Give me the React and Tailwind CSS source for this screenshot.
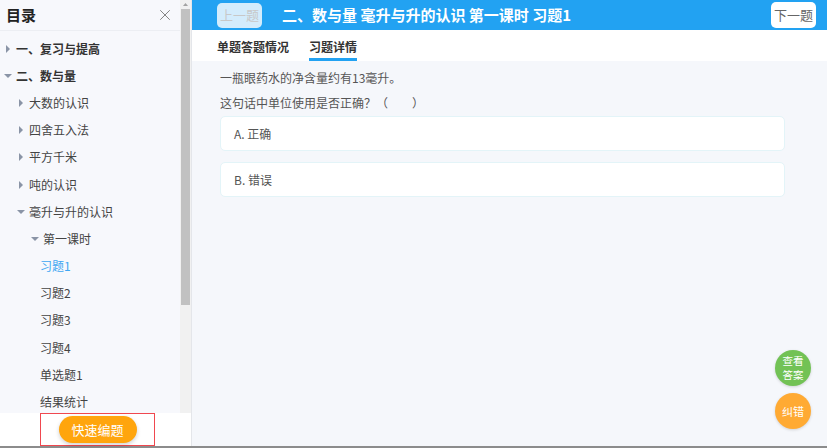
import { X } from "lucide-react";

const tree = [
  { label: "一、复习与提高", level: 0, arrow: "right" },
  { label: "二、数与量", level: 0, arrow: "down" },
  { label: "大数的认识", level: 1, arrow: "right" },
  { label: "四舍五入法", level: 1, arrow: "right" },
  { label: "平方千米", level: 1, arrow: "right" },
  { label: "吨的认识", level: 1, arrow: "right" },
  { label: "毫升与升的认识", level: 1, arrow: "down" },
  { label: "第一课时", level: 2, arrow: "down" },
  { label: "习题1", level: 3, active: true },
  { label: "习题2", level: 3 },
  { label: "习题3", level: 3 },
  { label: "习题4", level: 3 },
  { label: "单选题1", level: 3 },
  { label: "结果统计", level: 3 },
];

function Caret({ dir }) {
  return dir === "down" ? (
    <svg width="8" height="6" viewBox="0 0 8 6" className="shrink-0">
      <path d="M0 1h8L4 5z" fill="#8a94a6" />
    </svg>
  ) : (
    <svg width="6" height="8" viewBox="0 0 6 8" className="shrink-0">
      <path d="M1 0v8l4-4z" fill="#8a94a6" />
    </svg>
  );
}

function TreeRow({ item }) {
  const pad = ["pl-[4px]", "pl-[17px]", "pl-[31px]", "pl-[40px]"][item.level];
  const text = item.active
    ? "text-[#3ea6f2]"
    : item.level === 0
    ? "font-bold text-[#333]"
    : "text-[#444]";
  return (
    <div className={`flex h-[27.2px] shrink-0 items-center gap-[4px] ${pad}`}>
      {item.arrow && (
        <span className="flex w-[8px] justify-center">
          <Caret dir={item.arrow} />
        </span>
      )}
      <span className={`text-[12px] ${text}`}>{item.label}</span>
    </div>
  );
}

export default function App() {
  return (
    <div
      className="flex h-[448px] w-[827px] border-b-2 border-[#8c8c8c] bg-[#f5f7fb]"
      style={{ fontFamily: '"Noto Sans CJK SC", "Noto Sans", sans-serif' }}
    >
      {/* sidebar */}
      <div className="flex w-[192px] shrink-0 flex-col border-r border-[#e4e6ea]">
        <div className="flex h-[413px] shrink-0">
          <div className="flex flex-1 flex-col overflow-hidden bg-[#f7f8fc]">
            <div className="flex h-[31px] shrink-0 items-center justify-between border-b border-[#eceef3] pl-[6px] pr-[6px]">
              <span className="text-[15px] font-bold text-[#222]">目录</span>
              <X className="h-[18px] w-[18px] text-[#777]" strokeWidth={1.2} />
            </div>
            <div className="flex flex-col pt-[4px]">
              {tree.map((item) => (
                <TreeRow key={item.label} item={item} />
              ))}
            </div>
          </div>
          <div className="flex w-[11px] flex-col bg-[#f1f1f1]">
            <div className="flex h-[9px] items-center justify-center">
              <svg width="5" height="3" viewBox="0 0 5 3">
                <path d="M0 3h5L2.5 0z" fill="#a3a3a3" />
              </svg>
            </div>
            <div className="mx-[1px] h-[296px] bg-[#c1c1c1]" />
          </div>
        </div>
        <div className="flex flex-1 bg-white pl-[40px]">
          <div className="flex h-[33px] w-[115px] items-center justify-center border border-[#f0484f]">
            <button className="h-[27px] w-[78px] rounded-full bg-[#ffa50d] text-[13px] text-white shadow-[0_2px_4px_rgba(0,0,0,0.18)]">
              快速编题
            </button>
          </div>
        </div>
      </div>

      {/* main */}
      <div className="relative flex flex-1 flex-col">
        <div className="flex h-[30px] items-center bg-[#22a2f2] pl-[25px] pr-[11px]">
          <button className="h-[25px] w-[45px] rounded-[5px] bg-white/80 text-[13px] text-[#c8c8c8]">
            上一题
          </button>
          <span className="ml-[20px] flex-1 text-[15px] font-bold text-white">
            二、数与量 毫升与升的认识 第一课时 习题1
          </span>
          <button className="h-[26px] w-[45px] rounded-[5px] bg-white text-[13px] text-[#666]">
            下一题
          </button>
        </div>
        <div className="flex h-[31px] items-stretch gap-[20px] bg-white pl-[25px]">
          <span className="flex items-center pt-[2px] text-[12px] font-bold text-[#333]">单题答题情况</span>
          <span className="flex items-center border-b-[3px] border-[#22a2f2] pt-[5px] text-[12px] font-bold text-[#333]">
            习题详情
          </span>
        </div>
        <div className="pl-[28px] pr-[42px] pt-[7px] text-[12px] text-[#555]">
          <p className="h-[25px] leading-[20px]">一瓶眼药水的净含量约有13毫升。</p>
          <p className="h-[23px] leading-[20px]">这句话中单位使用是否正确？（　　）</p>
          <div className="flex flex-col gap-[11px]">
            <div className="flex h-[35px] items-center rounded-[5px] border border-[#e3f4f8] bg-white pl-[13px]">
              A. 正确
            </div>
            <div className="flex h-[35px] items-center rounded-[5px] border border-[#e3f4f8] bg-white pl-[13px]">
              B. 错误
            </div>
          </div>
        </div>
        <div className="absolute right-[16px] top-[350px] flex flex-col items-center gap-[7px]">
          <div className="flex h-[36px] w-[36px] flex-col items-center justify-center rounded-full bg-[#72c255] text-[10.5px] leading-[14px] text-white shadow-[0_1px_3px_rgba(0,0,0,0.15)]">
            <span>查看</span>
            <span>答案</span>
          </div>
          <div className="flex h-[36px] w-[36px] items-center justify-center rounded-full bg-[#ffaa33] text-[11px] text-white shadow-[0_1px_3px_rgba(0,0,0,0.15)]">
            纠错
          </div>
        </div>
      </div>
    </div>
  );
}
